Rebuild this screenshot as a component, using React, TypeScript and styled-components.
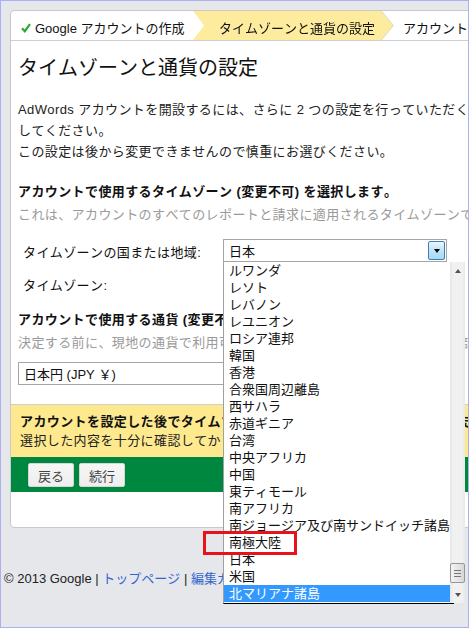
import styled, { createGlobalStyle } from 'styled-components';

const GlobalStyle = createGlobalStyle`
  html, body {
    margin: 0;
    padding: 0;
  }
  body {
    font-family: "Liberation Sans", "Noto Sans CJK JP", sans-serif;
    font-size: 13px;
    font-kerning: none;
    font-feature-settings: "kern" 0, "palt" 0;
    color: #222;
  }
`;

const Frame = styled.div`
  position: relative;
  width: 469px;
  height: 628px;
  box-sizing: border-box;
  border: 1px solid #adaff3;
  background: #e5e7eb;
  overflow: hidden;
`;

const Card = styled.div`
  width: 520px;
  margin: 9px 0 0 9px;
  background: #fff;
  border: 1px solid #c9c9c9;
  border-radius: 4px 0 0 4px;
`;

const TabBar = styled.div`
  display: flex;
  height: 29px;
  border-bottom: 1px solid #cfcfcf;
  white-space: nowrap;
`;

const TabShape = styled.div`
  filter: drop-shadow(1px 0 0 #d8d8d8);
`;

const Tab = styled.div<{ $active?: boolean; $width?: number }>`
  display: flex;
  align-items: center;
  gap: 4px;
  box-sizing: border-box;
  height: 100%;
  width: ${(p) => (p.$width ? `${p.$width}px` : 'auto')};
  padding-left: ${(p) => (p.$active ? '26px' : '10px')};
  padding-top: 4px;
  background: ${(p) => (p.$active ? '#fdec9e' : 'transparent')};
  clip-path: ${(p) => (p.$active
    ? 'polygon(0 0, calc(100% - 12px) 0, 100% 50%, calc(100% - 12px) 100%, 0 100%, 11px 50%)'
    : 'none')};
  font-size: 13px;
  color: #111;
`;

const Body = styled.div`
  padding: 13px 8px 19px 7px;
  white-space: nowrap;
  letter-spacing: 0.4px;
`;

const Heading = styled.h1`
  margin: 0;
  font-size: 20px;
  font-weight: normal;
  line-height: 28px;
  letter-spacing: 0;
  color: #111;
`;

const Para = styled.p`
  margin: 17px 0 0;
  line-height: 21px;
`;

const SectionTitle = styled.div<{ $top: number }>`
  margin-top: ${(p) => p.$top}px;
  font-weight: bold;
  line-height: 21px;
  color: #111;
`;

const Hint = styled.div`
  margin-top: 2px;
  line-height: 21px;
  color: #9a9a9a;
`;

const FieldRow = styled.div<{ $top: number; $height: number }>`
  display: flex;
  align-items: center;
  margin-top: ${(p) => p.$top}px;
  height: ${(p) => p.$height}px;
`;

const FieldLabel = styled.div`
  width: 205px;
  box-sizing: border-box;
  padding-left: 5px;
  padding-top: 2px;
  color: #111;
`;

const SelectBox = styled.div<{ $width: number }>`
  position: relative;
  display: flex;
  align-items: center;
  box-sizing: border-box;
  width: ${(p) => p.$width}px;
  height: 23px;
  padding-left: 5px;
  border: 1px solid #a5a5a5;
  background: #fff;
  color: #111;
  letter-spacing: 0;
`;

const ArrowButton = styled.div`
  margin-left: auto;
  margin-right: 1px;
  width: 17px;
  height: 19px;
  box-sizing: border-box;
  border: 1px solid #3c7fb1;
  border-radius: 2px;
  background: linear-gradient(#eaf6fd, #bfe4f9 50%, #a7d9f5);
  display: flex;
  align-items: center;
  justify-content: center;
`;

const TriDown = styled.span<{ $color?: string }>`
  width: 0;
  height: 0;
  border-left: 3.5px solid transparent;
  border-right: 3.5px solid transparent;
  border-top: 4px solid ${(p) => p.$color || '#000'};
`;

const TriUp = styled.span`
  width: 0;
  height: 0;
  border-left: 3.5px solid transparent;
  border-right: 3.5px solid transparent;
  border-bottom: 4px solid #555;
`;

const DropList = styled.div`
  position: absolute;
  top: calc(100% + 1px);
  left: -1px;
  z-index: 5;
  display: flex;
  width: 231px;
  height: 342px;
  box-sizing: border-box;
  border: 1px solid #000;
  border-top: none;
  border-left-color: #a0a0a0;
  background: #fff;
`;

const Options = styled.div`
  flex: 1;
`;

const Option = styled.div<{ $selected?: boolean }>`
  height: 17px;
  line-height: 17px;
  padding-left: 5px;
  background: ${(p) => (p.$selected ? '#3399ff' : 'transparent')};
  color: ${(p) => (p.$selected ? '#fff' : '#111')};
`;

const ScrollBar = styled.div`
  width: 17px;
  display: flex;
  flex-direction: column;
  background: linear-gradient(90deg, #e6e6e6, #f1f1f1 20%, #f1f1f1 80%, #e8e8e8);
`;

const ScrollButton = styled.div`
  height: 17px;
  display: flex;
  align-items: center;
  justify-content: center;
`;

const ScrollTrack = styled.div`
  flex: 1;
  display: flex;
  flex-direction: column;
  justify-content: flex-end;
  align-items: center;
  padding-bottom: 3px;
`;

const Thumb = styled.div`
  width: 15px;
  height: 20px;
  box-sizing: border-box;
  border: 1px solid #979797;
  border-radius: 2px;
  background: linear-gradient(90deg, #f3f3f3, #e4e4e4 60%, #d6d6d6);
  display: flex;
  flex-direction: column;
  align-items: center;
  justify-content: center;
  gap: 2px;
`;

const Grip = styled.span`
  width: 7px;
  height: 1px;
  background: #777;
`;

const Notice = styled.div`
  border-top: 1px solid #cfcfcf;
  background: #fee98e;
  padding: 7px 9px;
  line-height: 19px;
  white-space: nowrap;
  letter-spacing: 0.4px;
`;

const NoticeTitle = styled.div`
  font-weight: bold;
  color: #111;
`;

const ActionBar = styled.div`
  display: flex;
  gap: 5px;
  height: 35px;
  box-sizing: border-box;
  padding: 6px 0 0 17px;
  background: #00873f;
`;

const Button = styled.button`
  height: 24px;
  padding: 0 9px;
  border: 1px solid #d6d6d6;
  border-radius: 2px;
  background: linear-gradient(#f6f6f6, #eeeeee);
  font-family: "Liberation Sans", "Noto Sans CJK JP", sans-serif;
  font-size: 13px;
  color: #444;
`;

const Spacer = styled.div`
  height: 35px;
`;

const Footer = styled.div`
  margin-top: 41px;
  padding-left: 3px;
  line-height: 20px;
  white-space: nowrap;
  color: #222;
`;

const FooterLink = styled.span`
  color: #3366cc;
`;

const Annotation = styled.div`
  position: absolute;
  left: 202px;
  top: 530px;
  width: 94px;
  height: 24px;
  box-sizing: border-box;
  border: 3px solid #e8121a;
  z-index: 10;
`;

const Check = () => (
  <svg width='10' height='10' viewBox='0 0 10 10'>
    <path d='M1 5.2 L3.8 8.2 L9 1.2' fill='none' stroke='#2fa82f' strokeWidth='2.2' />
  </svg>
);

const COUNTRIES = [
  'ルワンダ', 'レソト', 'レバノン', 'レユニオン', 'ロシア連邦', '韓国', '香港',
  '合衆国周辺離島', '西サハラ', '赤道ギニア', '台湾', '中央アフリカ', '中国',
  '東ティモール', '南アフリカ', '南ジョージア及び南サンドイッチ諸島', '南極大陸',
  '日本', '米国', '北マリアナ諸島',
];

export default function App() {
  return (
    <>
      <GlobalStyle />
      <Frame>
        <Card>
          <TabBar>
            <Tab $width={182}>
              <Check />
              Google アカウントの作成
            </Tab>
            <TabShape>
              <Tab $active $width={200}>タイムゾーンと通貨の設定</Tab>
            </TabShape>
            <Tab>アカウントの有効化</Tab>
          </TabBar>
          <Body>
            <Heading>タイムゾーンと通貨の設定</Heading>
            <Para>
              AdWords アカウントを開設するには、さらに 2 つの設定を行っていただく必要があります。以下の項目を設定
              <br />
              してください。
              <br />
              この設定は後から変更できませんので慎重にお選びください。
            </Para>
            <SectionTitle $top={19}>アカウントで使用するタイムゾーン (変更不可) を選択します。</SectionTitle>
            <Hint>これは、アカウントのすべてのレポートと請求に適用されるタイムゾーンです。</Hint>
            <FieldRow $top={14} $height={23}>
              <FieldLabel>タイムゾーンの国または地域:</FieldLabel>
              <SelectBox $width={224}>
                日本
                <ArrowButton>
                  <TriDown />
                </ArrowButton>
                <DropList>
                  <Options>
                    {COUNTRIES.map((c, i) => (
                      <Option key={c} $selected={i === COUNTRIES.length - 1}>{c}</Option>
                    ))}
                  </Options>
                  <ScrollBar>
                    <ScrollButton><TriUp /></ScrollButton>
                    <ScrollTrack>
                      <Thumb>
                        <Grip />
                        <Grip />
                        <Grip />
                      </Thumb>
                    </ScrollTrack>
                    <ScrollButton><TriDown $color='#555' /></ScrollButton>
                  </ScrollBar>
                </DropList>
              </SelectBox>
            </FieldRow>
            <FieldRow $top={10} $height={22}>
              <FieldLabel>タイムゾーン:</FieldLabel>
            </FieldRow>
            <SectionTitle $top={15}>アカウントで使用する通貨 (変更不可) を選択します。</SectionTitle>
            <Hint>決定する前に、現地の通貨で利用可能な支払方法を確認してください。一部の通貨では</Hint>
            <FieldRow $top={9} $height={23}>
              <SelectBox $width={360}>日本円 (JPY ￥)</SelectBox>
            </FieldRow>
          </Body>
          <Notice>
            <NoticeTitle>アカウントを設定した後でタイムゾーンと通貨の設定を変更することはできません。</NoticeTitle>
            <div>選択した内容を十分に確認してから続行してください。</div>
          </Notice>
          <ActionBar>
            <Button>戻る</Button>
            <Button>続行</Button>
          </ActionBar>
          <Spacer />
        </Card>
        <Footer>
          © 2013 Google | <FooterLink>トップページ</FooterLink> | <FooterLink>編集ガイドライン</FooterLink> | <FooterLink>プライバシー ポリシー</FooterLink>
        </Footer>
        <Annotation />
      </Frame>
    </>
  );
}
